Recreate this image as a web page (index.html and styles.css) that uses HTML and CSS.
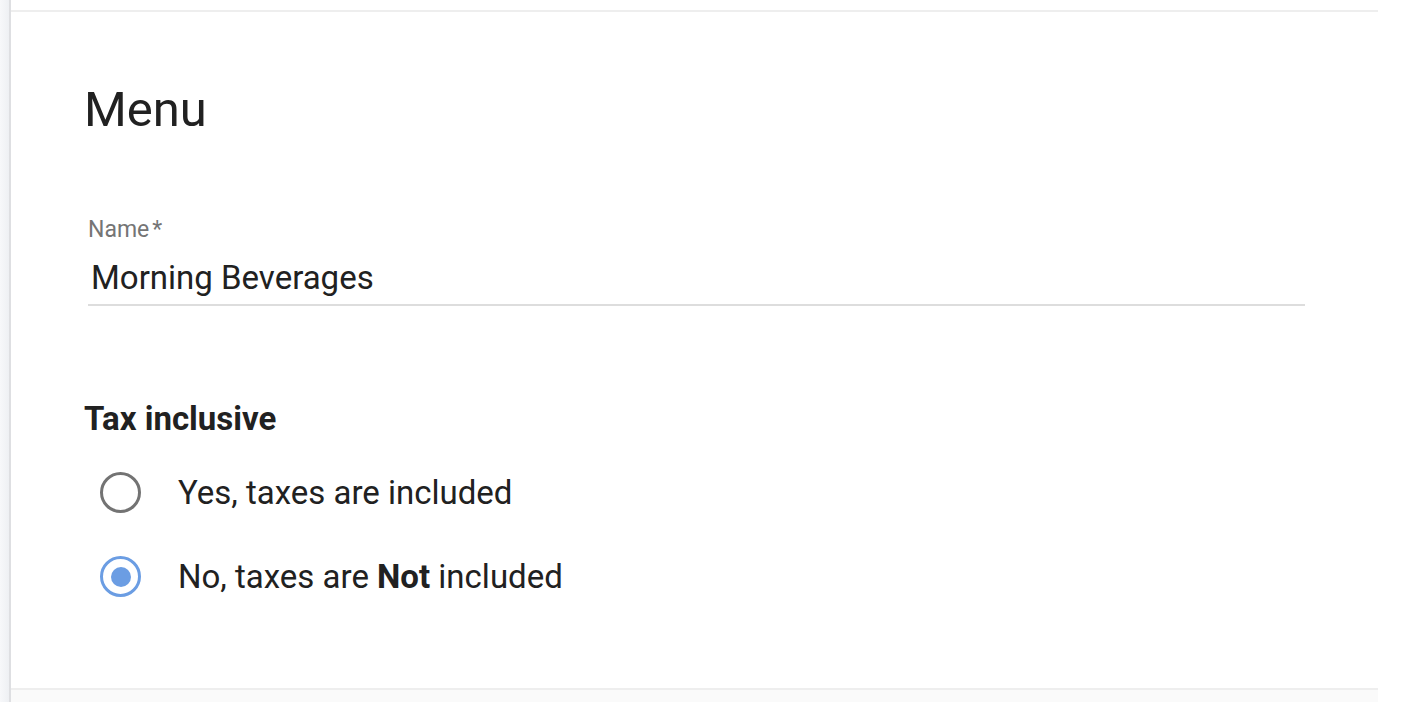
FILE: index.html
```html
<!DOCTYPE html>
<html>
<head>
<meta charset="utf-8">
<link rel="stylesheet" href="styles.css">
</head>
<body>
<div class="page">
  <div class="sidebar"></div>
  <div class="main">
    <div class="card">
      <h1 class="title">Menu</h1>
      <div class="field">
        <label class="field-label">Name<span class="req">*</span></label>
        <div class="field-value">Morning Beverages</div>
      </div>
      <h2 class="section">Tax inclusive</h2>
      <div class="radios">
        <div class="radio-row">
          <span class="radio"></span>
          <span class="radio-text">Yes, taxes are included</span>
        </div>
        <div class="radio-row">
          <span class="radio checked"></span>
          <span class="radio-text">No, taxes are <b>Not</b> included</span>
        </div>
      </div>
    </div>
    <div class="footer"></div>
  </div>
  <div class="gutter"></div>
</div>
</body>
</html>
```
FILE: styles.css
```css
html, body {
  margin: 0;
  padding: 0;
  background: #fff;
}
body {
  font-family: Roboto, "Liberation Sans", sans-serif;
  color: #212121;
}
.page {
  display: flex;
  height: 702px;
  overflow: hidden;
}
.sidebar {
  width: 9px;
  flex: none;
  background: linear-gradient(to right, #f7f8fa, #eef0f3);
  border-right: 2px solid #dedfe2;
}
.main {
  width: 1367px;
  flex: none;
  display: flex;
  flex-direction: column;
  padding-top: 10px;
}
.gutter {
  flex: 1;
  background: #fff;
}
.card {
  border-top: 2px solid #eeeeee;
  border-bottom: 2px solid #eeeeee;
  padding: 68px 0 0 73px;
  height: 680px;
  box-sizing: border-box;
  flex: none;
}
.footer {
  flex: 1;
  background: #fafafa;
}
.title {
  margin: 0;
  font-size: 49px;
  font-weight: 400;
  line-height: 60px;
  color: #212121;
}
.field {
  margin-top: 76px;
  margin-left: 4px;
  width: 1217px;
  border-bottom: 2px solid #dddddd;
  padding-bottom: 6px;
}
.field-label {
  display: block;
  font-size: 23px;
  line-height: 28px;
  color: #757575;
}
.req {
  margin-left: 3px;
}
.field-value {
  margin-top: 14px;
  margin-left: 3px;
  font-size: 33px;
  line-height: 40px;
  color: #212121;
}
.section {
  margin: 93px 0 0 0;
  font-size: 33px;
  font-weight: 700;
  line-height: 40px;
  color: #212121;
}
.radios {
  margin-top: 33px;
  margin-left: 16px;
  display: flex;
  flex-direction: column;
  gap: 43px;
}
.radio-row {
  display: flex;
  align-items: center;
  gap: 37px;
  height: 41px;
}
.radio {
  width: 41px;
  height: 41px;
  flex: none;
  box-sizing: border-box;
  border: 3px solid #737373;
  border-radius: 50%;
  display: flex;
  align-items: center;
  justify-content: center;
}
.radio.checked {
  border-color: #6b9de3;
}
.radio.checked::after {
  content: "";
  width: 20px;
  height: 20px;
  border-radius: 50%;
  background: #6b9de3;
}
.radio-text {
  font-size: 33px;
  line-height: 40px;
  color: #212121;
}
.radio-text b {
  font-weight: 700;
}
```
